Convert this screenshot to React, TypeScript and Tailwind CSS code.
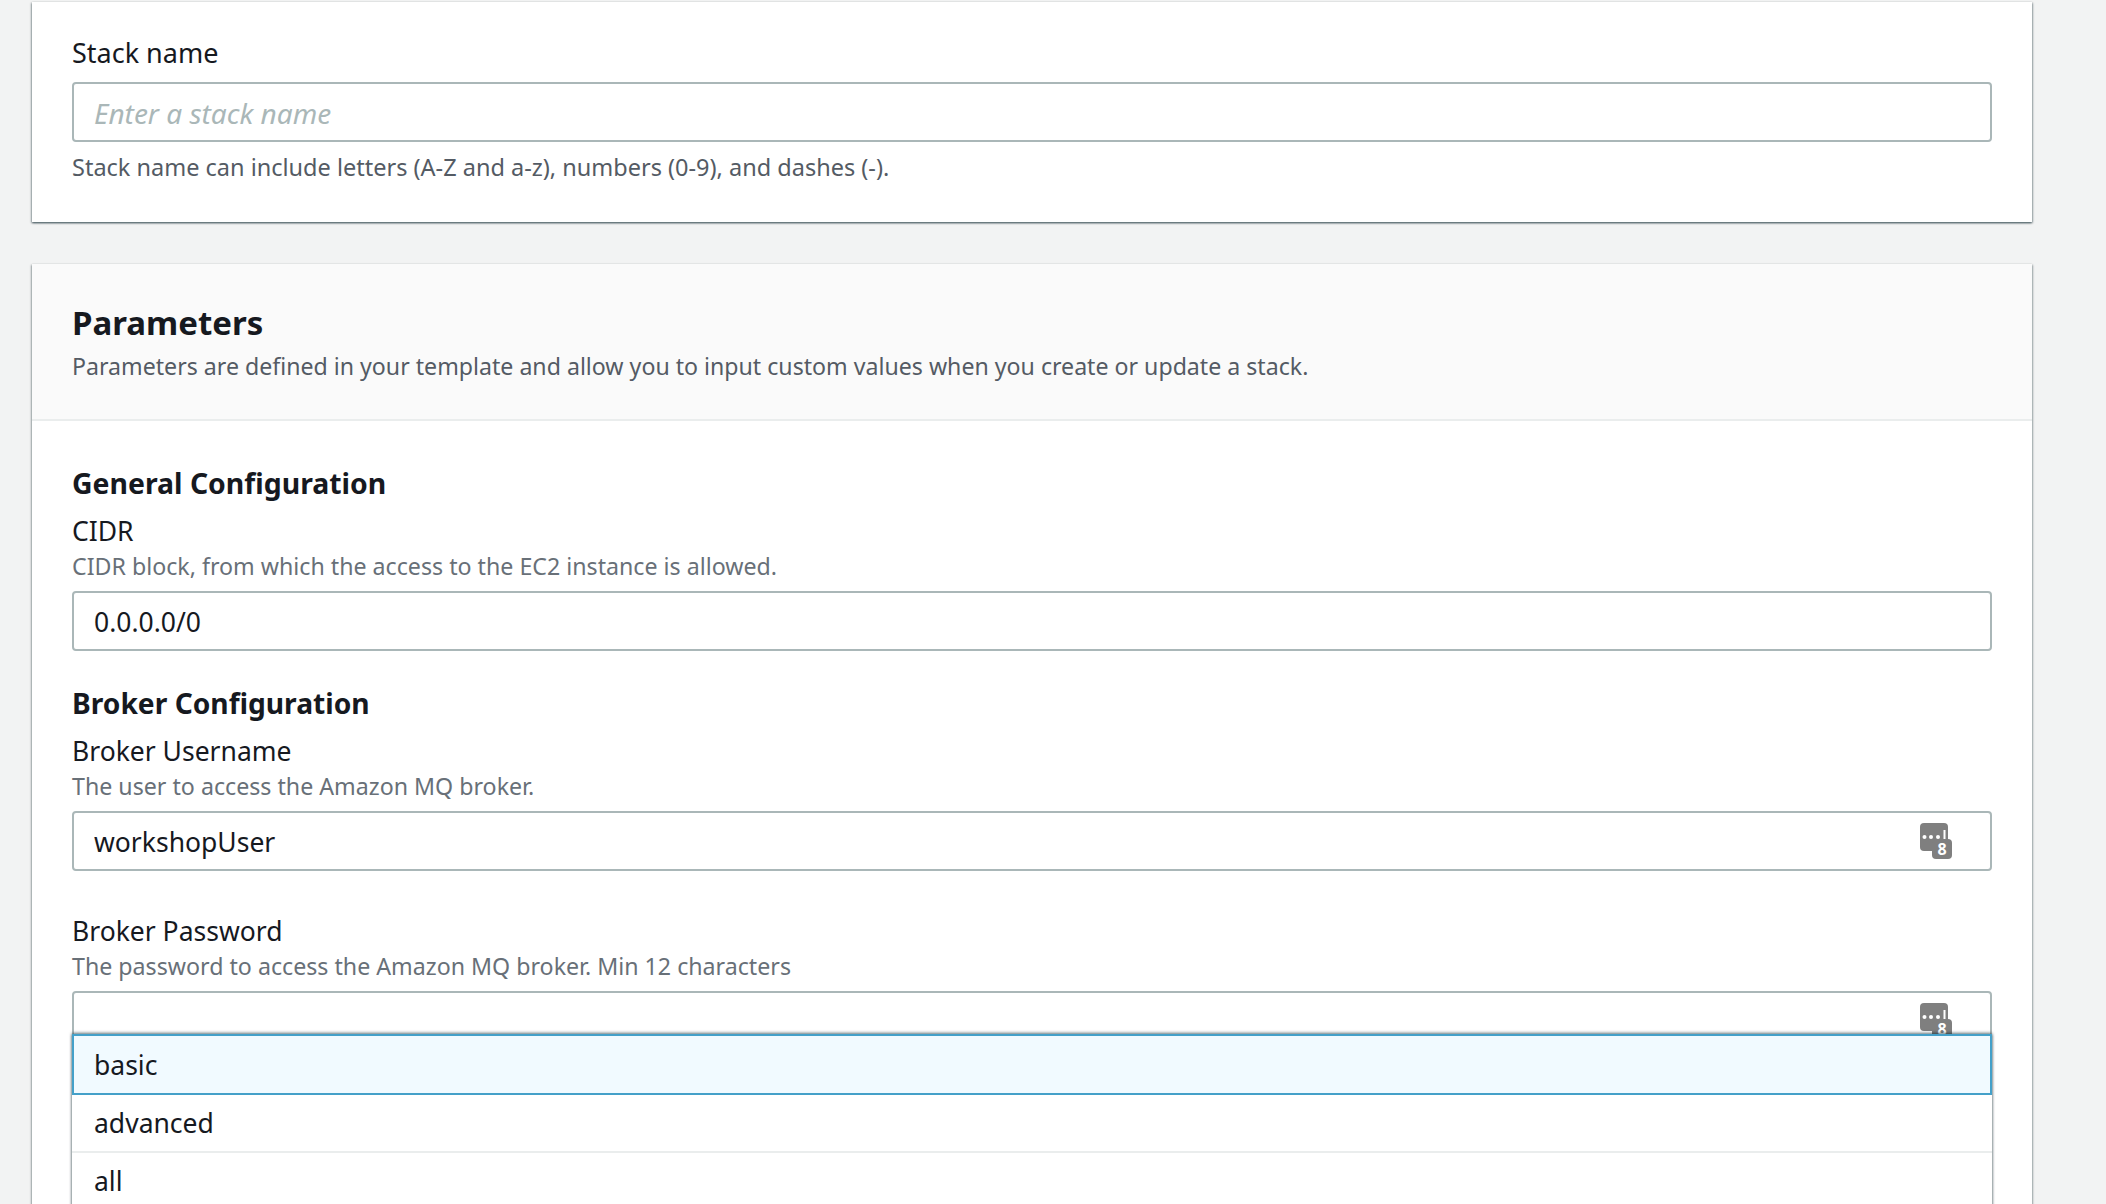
function KeyIcon() {
  return (
    <svg width="32" height="36" viewBox="0 0 32 36" className="absolute right-[40px] top-[12px]">
      <rect x="0" y="0" width="28" height="28" rx="4" fill="#7f7f7f" />
      <rect x="12" y="16" width="20" height="20" rx="4" fill="#7f7f7f" />
      <circle cx="4.5" cy="14" r="2" fill="#fff" />
      <circle cx="11" cy="14" r="2" fill="#fff" />
      <circle cx="18" cy="14" r="2" fill="#fff" />
      <rect x="23.5" y="7" width="2" height="9" fill="#fff" />
      <text x="22" y="32" fontSize="16" fontWeight="700" fill="#fff" textAnchor="middle" fontFamily="Noto Sans, sans-serif">8</text>
    </svg>
  );
}

function Field({ label, hint, value, icon }: { label: string; hint: string; value: string; icon?: boolean }) {
  return (
    <div>
      <div className="h-[29px] leading-[29px] text-[26.5px] text-[#16191f]">{label}</div>
      <div className="mt-[6px] h-[29px] leading-[29px] text-[23.2px] text-[#687078]">{hint}</div>
      <div className="relative mt-[10px]">
        <input
          readOnly
          value={value}
          className="block w-full h-[60px] border-2 border-[#aab7b8] rounded-[4px] bg-white pl-[20px] pt-[2px] text-[26.5px] text-[#16191f] outline-none"
        />
        {icon && <KeyIcon />}
      </div>
    </div>
  );
}

export default function App() {
  return (
    <div className="relative h-[1204px] overflow-hidden bg-[#f2f3f3] pt-[2px] pl-[32px] pr-[74px] font-['Noto_Sans',sans-serif]">
      <section className="h-[220px] bg-white pt-[36px] px-[40px] shadow-[0_1px_2px_0_rgba(0,28,36,0.6),1px_1px_2px_0_rgba(0,28,36,0.2),-1px_1px_2px_0_rgba(0,28,36,0.2)]">
        <div className="h-[29px] leading-[29px] text-[27px] text-[#16191f]">Stack name</div>
        <input
          readOnly
          placeholder="Enter a stack name"
          className="block mt-[15px] w-full h-[60px] border-2 border-[#aab7b8] rounded-[4px] bg-white pl-[20px] pt-[2px] text-[28px] text-[#16191f] outline-none placeholder:italic placeholder:text-[#aab7b8]"
        />
        <p className="mt-[11px] leading-[29px] text-[23.5px] text-[#545b64]">
          Stack name can include letters (A-Z and a-z), numbers (0-9), and dashes (-).
        </p>
      </section>

      <section className="mt-[42px] bg-white shadow-[0_1px_2px_0_rgba(0,28,36,0.5),1px_1px_2px_0_rgba(0,28,36,0.2),-1px_1px_2px_0_rgba(0,28,36,0.2)]">
        <header className="h-[157px] bg-[#fafafa] border-b-2 border-[#eaeded] pt-[39px] px-[40px]">
          <h2 className="h-[40px] leading-[40px] text-[33px] font-bold text-[#16191f]">Parameters</h2>
          <p className="mt-[9px] leading-[29px] text-[23.15px] text-[#545b64]">
            Parameters are defined in your template and allow you to input custom values when you create or update a stack.
          </p>
        </header>
        <div className="px-[40px] pt-[46px] pb-[200px]">
          <h3 className="h-[32px] leading-[32px] text-[28.4px] font-bold text-[#16191f]">General Configuration</h3>
          <div className="mt-[18px]">
            <Field label="CIDR" hint="CIDR block, from which the access to the EC2 instance is allowed." value="0.0.0.0/0" />
          </div>
          <h3 className="mt-[36px] h-[32px] leading-[32px] text-[28.2px] font-bold text-[#16191f]">Broker Configuration</h3>
          <div className="mt-[18px]">
            <Field label="Broker Username" hint="The user to access the Amazon MQ broker." value="workshopUser" icon />
          </div>
          <div className="mt-[46px]">
            <Field label="Broker Password" hint="The password to access the Amazon MQ broker. Min 12 characters" value="" icon />
          </div>
        </div>
      </section>

      {/* dropdown list open over the password field */}
      <ul className="absolute left-[72px] top-[1034px] w-[1920px] bg-white text-[26.5px] text-[#16191f] shadow-[0_-1px_3px_0_rgba(0,28,36,0.6),1px_1px_2px_0_rgba(0,28,36,0.2),-1px_1px_2px_0_rgba(0,28,36,0.2)]">
        <li className="h-[61px] leading-[59px] pl-[20px] border-2 border-[#44a0c9] bg-[#f1faff]">basic</li>
        <li className="h-[58px] leading-[56px] pl-[22px] border-b-2 border-[#eaeded]">advanced</li>
        <li className="h-[58px] leading-[56px] pl-[22px]">all</li>
      </ul>
    </div>
  );
}
